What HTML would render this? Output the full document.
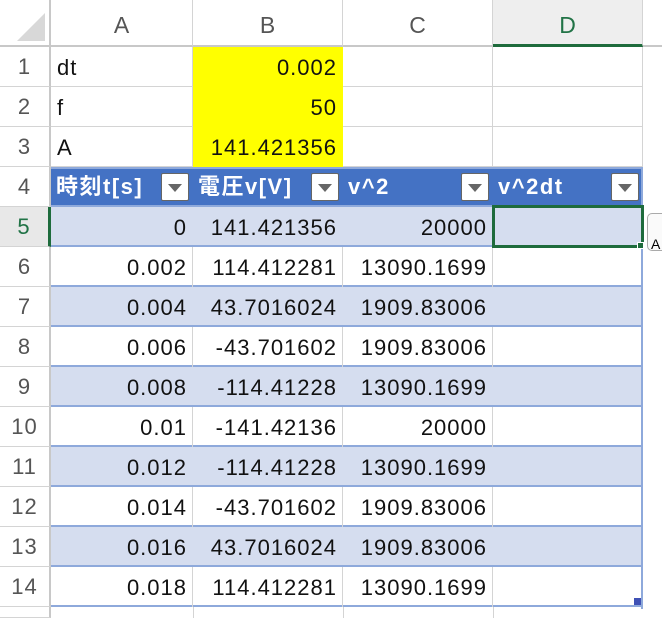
<!DOCTYPE html><html><head><meta charset="utf-8"><style>
html,body{margin:0;width:662px;height:618px;overflow:hidden}
body{background:#fff;font-family:"Liberation Sans","Noto Sans CJK JP",sans-serif;position:relative}
div{position:absolute;box-sizing:border-box}
.ch{top:0;height:47px;border-right:1px solid #d4d4d4;border-bottom:2px solid #c8c8c8;background:#fff;color:#555;font-size:23px;text-align:center;line-height:50px}
.rh{left:0;width:51px;height:40px;border-right:2px solid #c8c8c8;border-bottom:1px solid #d4d4d4;color:#555;font-size:22px;text-align:center;line-height:40px;letter-spacing:1px}
.c{height:40px;border-right:1px solid #d4d4d4;border-bottom:1px solid #d4d4d4;font-size:22px;line-height:42px;color:#111;padding:0 5px 0 6px;white-space:nowrap;letter-spacing:1px}
.r{text-align:right}
.t{height:40px;border-bottom:2px solid #8ea9db;left:51px;width:592px}
.hd{color:#fff;font-weight:bold;font-size:22px;line-height:40px;padding-left:5px;letter-spacing:1.5px}
.dd{width:28px;height:28px;top:6px;background:#fff;border:1px solid #666;border-radius:2px}
.dd:after{content:"";position:absolute;left:6px;top:10px;border-left:7px solid transparent;border-right:7px solid transparent;border-top:8px solid #666}
</style></head><body>
<div style="left:0;top:0;width:51px;height:47px;border-right:2px solid #c8c8c8;border-bottom:2px solid #c8c8c8"></div>
<div style="left:17px;top:13px;width:0;height:0;border-left:28px solid transparent;border-bottom:28px solid #d8d8d8"></div>
<div class="ch" style="left:51px;width:142px">A</div>
<div class="ch" style="left:193px;width:150px">B</div>
<div class="ch" style="left:343px;width:150px">C</div>
<div class="ch" style="left:493px;width:150px;color:#217346;background:#eee;border-bottom:3px solid #1e6b3c">D</div>
<div class="ch" style="left:643px;width:19px;border-right:0"></div>

<div class="rh" style="top:47px">1</div><div class="rh" style="top:87px">2</div><div class="rh" style="top:127px">3</div><div class="rh" style="top:167px">4</div>
<div class="rh" style="top:207px;color:#217346;background:#e8e8e8;border-right:3px solid #1e6b3c">5</div>
<div class="rh" style="top:247px">6</div><div class="rh" style="top:287px">7</div><div class="rh" style="top:327px">8</div><div class="rh" style="top:367px">9</div><div class="rh" style="top:407px">10</div><div class="rh" style="top:447px">11</div><div class="rh" style="top:487px">12</div><div class="rh" style="top:527px">13</div><div class="rh" style="top:567px">14</div>
<div class="rh" style="top:607px;height:11px"></div>

<div class="c" style="left:51px;top:47px;width:142px">dt</div>
<div class="c r" style="left:193px;top:47px;width:150px;background:#ff0;border-color:#ff0">0.002</div>
<div class="c" style="left:343px;top:47px;width:150px"></div><div class="c" style="left:493px;top:47px;width:150px"></div>
<div class="c" style="left:51px;top:87px;width:142px">f</div>
<div class="c r" style="left:193px;top:87px;width:150px;background:#ff0;border-color:#ff0">50</div>
<div class="c" style="left:343px;top:87px;width:150px"></div><div class="c" style="left:493px;top:87px;width:150px"></div>
<div class="c" style="left:51px;top:127px;width:142px">A</div>
<div class="c r" style="left:193px;top:127px;width:150px;background:#ff0;border-color:#ff0">141.421356</div>
<div class="c" style="left:343px;top:127px;width:150px"></div><div class="c" style="left:493px;top:127px;width:150px"></div>

<div class="t" style="top:167px;background:#4472c4;border-top:2px solid #8ea9db"></div>
<div class="hd" style="left:51px;top:167px">時刻t[s]</div><div class="dd" style="left:161px;top:173px"></div>
<div class="hd" style="left:193px;top:167px">電圧v[V]</div><div class="dd" style="left:311px;top:173px"></div>
<div class="hd" style="left:343px;top:167px">v^2</div><div class="dd" style="left:461px;top:173px"></div>
<div class="hd" style="left:493px;top:167px">v^2dt</div><div class="dd" style="left:611px;top:173px"></div>

<div class="t" style="top:207px;background:#d5ddef"></div>
<div class="t" style="top:247px"></div>
<div class="t" style="top:287px;background:#d5ddef"></div>
<div class="t" style="top:327px"></div>
<div class="t" style="top:367px;background:#d5ddef"></div>
<div class="t" style="top:407px"></div>
<div class="t" style="top:447px;background:#d5ddef"></div>
<div class="t" style="top:487px"></div>
<div class="t" style="top:527px;background:#d5ddef"></div>
<div class="t" style="top:567px"></div>
<div style="left:641px;top:167px;width:2px;height:442px;background:#8ea9db"></div>
<div style="left:634px;top:598px;width:7px;height:7px;background:#3f51b5"></div>
<div style="left:193px;top:607px;width:1px;height:11px;background:#d4d4d4"></div>
<div style="left:343px;top:607px;width:1px;height:11px;background:#d4d4d4"></div>
<div style="left:493px;top:607px;width:1px;height:11px;background:#d4d4d4"></div>

<div id="rows"></div>
<div style="left:492px;top:205px;width:152px;height:43px;border:3px solid #1e6b3c"></div>
<div style="left:637px;top:242px;width:7px;height:7px;background:#1e6b3c;border:1px solid #fff"></div>
<div style="left:647px;top:213px;width:30px;height:38px;border:1px solid #aaa;border-radius:5px;background:#fafafa;font-size:14px;line-height:60px;padding-left:3px">A</div>
<script>
var d=[["0","141.421356","20000"],["0.002","114.412281","13090.1699"],["0.004","43.7016024","1909.83006"],["0.006","-43.701602","1909.83006"],["0.008","-114.41228","13090.1699"],["0.01","-141.42136","20000"],["0.012","-114.41228","13090.1699"],["0.014","-43.701602","1909.83006"],["0.016","43.7016024","1909.83006"],["0.018","114.412281","13090.1699"]];
var h="";d.forEach(function(r,i){var y=207+i*40,b=i%2==0?"border-right-color:transparent;":"";
h+='<div class="c r" style="border-bottom:0;'+b+'left:51px;top:'+y+'px;width:142px">'+r[0]+'</div>';
h+='<div class="c r" style="border-bottom:0;'+b+'left:193px;top:'+y+'px;width:150px">'+r[1]+'</div>';
h+='<div class="c r" style="border-bottom:0;'+b+'left:343px;top:'+y+'px;width:150px">'+r[2]+'</div>';});
document.getElementById("rows").outerHTML=h;
</script>
</body></html>
